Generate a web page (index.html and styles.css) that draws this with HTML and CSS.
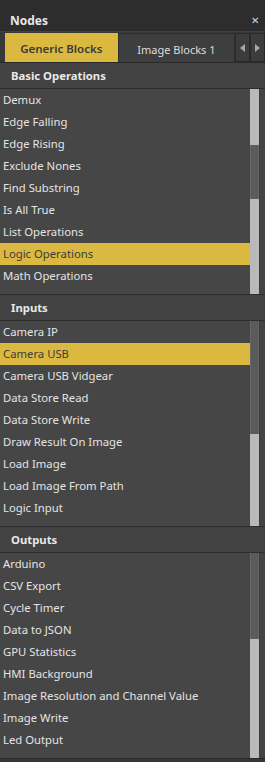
FILE: index.html
```html
<!DOCTYPE html>
<html lang="en">
<head>
  <meta charset="UTF-8">
  <meta name="viewport" content="width=device-width, initial-scale=1.0">
  <title>Nodes</title>
  <link rel="stylesheet" href="styles.css">
</head>
<body>
  <div class="panel">
    <!-- Title -->
    <div class="titlebar">
      <span class="title">Nodes</span>
      <span class="close">&#x2715;</span>
    </div>

    <!-- Tabs -->
    <div class="tabs">
      <div class="tab active">Generic Blocks</div>
      <div class="tab">Image Blocks 1</div>
      <div class="tab-arrow">
        <svg width="5" height="8" viewBox="0 0 5 8"><path d="M5 0 L0 4 L5 8 Z" fill="#a8a8a8"/></svg>
      </div>
      <div class="tab-arrow">
        <svg width="5" height="8" viewBox="0 0 5 8"><path d="M0 0 L5 4 L0 8 Z" fill="#a8a8a8"/></svg>
      </div>
    </div>

    <!-- Basic Operations -->
    <div class="group first">
      <div class="group-head">Basic Operations</div>
      <div class="group-body">
        <ul class="items">
          <li>Demux</li>
          <li>Edge Falling</li>
          <li>Edge Rising</li>
          <li>Exclude Nones</li>
          <li>Find Substring</li>
          <li>Is All True</li>
          <li>List Operations</li>
          <li class="selected">Logic Operations</li>
          <li>Math Operations</li>
        </ul>
        <div class="scroll"><div class="thumb" style="margin-top:56px;height:54px"></div></div>
        <div class="edge"></div>
      </div>
    </div>

    <!-- Inputs -->
    <div class="group">
      <div class="group-head">Inputs</div>
      <div class="group-body">
        <ul class="items">
          <li>Camera IP</li>
          <li class="selected">Camera USB</li>
          <li>Camera USB Vidgear</li>
          <li>Data Store Read</li>
          <li>Data Store Write</li>
          <li>Draw Result On Image</li>
          <li>Load Image</li>
          <li>Load Image From Path</li>
          <li>Logic Input</li>
        </ul>
        <div class="scroll"><div class="thumb" style="margin-top:0;height:113px"></div></div>
        <div class="edge"></div>
      </div>
    </div>

    <!-- Outputs -->
    <div class="group">
      <div class="group-head">Outputs</div>
      <div class="group-body">
        <ul class="items">
          <li>Arduino</li>
          <li>CSV Export</li>
          <li>Cycle Timer</li>
          <li>Data to JSON</li>
          <li>GPU Statistics</li>
          <li>HMI Background</li>
          <li>Image Resolution and Channel Value</li>
          <li>Image Write</li>
          <li>Led Output</li>
        </ul>
        <div class="scroll"><div class="thumb" style="margin-top:0;height:86px"></div></div>
        <div class="edge"></div>
      </div>
    </div>

    <div class="footer"></div>
  </div>
</body>
</html>
```

FILE: styles.css
```css
body {
  margin: 0;
  background-color: #2d2d2d;
  font-family: "Noto Sans", "Open Sans", sans-serif;
  font-size: 11.3px;
  color: #e4e4e4;
}

.panel {
  width: 265px;
  height: 762px;
  overflow: hidden;
  display: flex;
  flex-direction: column;
}

.titlebar {
  height: 32px;
  box-sizing: border-box;
  padding: 12px 6px 0 10px;
  display: flex;
  justify-content: space-between;
  background-color: #2d2d2d;
  border-bottom: 1px solid #424242;
  line-height: 17px;
}

.title {
  font-weight: bold;
  font-size: 12px;
  color: #e8e8e8;
}

.close {
  font-size: 10px;
  color: #d8d8d8;
}

.tabs {
  height: 31px;
  box-sizing: border-box;
  display: flex;
  padding: 0 0 0 5px;
  background-color: #383838;
  border-bottom: 1px solid #2a2a2a;
}

.tab {
  width: 118px;
  margin-top: 1px;
  display: flex;
  align-items: center;
  justify-content: center;
  background-color: #3e3e3e;
  border: 1px solid #2f2f2f;
  border-bottom: none;
  box-sizing: border-box;
  color: #dcdcdc;
  font-size: 11px;
  padding-top: 2px;
}

.tab.active {
  width: 113px;
  background-color: #dbb940;
  border-color: #dbb940;
  color: #3a3a3a;
  font-weight: 600;
  font-size: 11.5px;
  padding-top: 0;
}

.tab-arrow {
  width: 15px;
  margin-top: 1px;
  display: flex;
  align-items: center;
  justify-content: center;
  background-color: #3c3c3c;
  border: 1px solid #2a2a2a;
  box-sizing: border-box;
}

.group {
  display: flex;
  flex-direction: column;
  border-top: 1px solid #2e2e2e;
}

.group.first {
  border-top: none;
}

.group-head {
  height: 25px;
  padding-left: 11px;
  line-height: 25px;
  font-weight: bold;
  color: #e8e8e8;
  background-color: #424242;
  border-bottom: 1px solid #2e2e2e;
}

.group-body {
  height: 205px;
  display: flex;
  background-color: #464646;
}

.items {
  flex: 1;
  margin: 0;
  padding: 0;
  list-style: none;
  overflow: hidden;
}

.items li {
  height: 22px;
  padding-left: 3px;
  line-height: 22px;
  white-space: nowrap;
}

.items li.selected {
  background-color: #dbb940;
  color: #3c3c3c;
}

.scroll {
  width: 9px;
  background-color: #b9b9b9;
}

.thumb {
  background-color: #5b5b5b;
  border-left: 1px solid #666;
  border-right: 1px solid #666;
  box-sizing: border-box;
}

.edge {
  width: 5px;
  background-color: #444444;
  border-left: 1px solid #3b3b3b;
}

.footer {
  flex: 1;
  background-color: #363636;
  border-top: 1px solid #2b2b2b;
}
```
